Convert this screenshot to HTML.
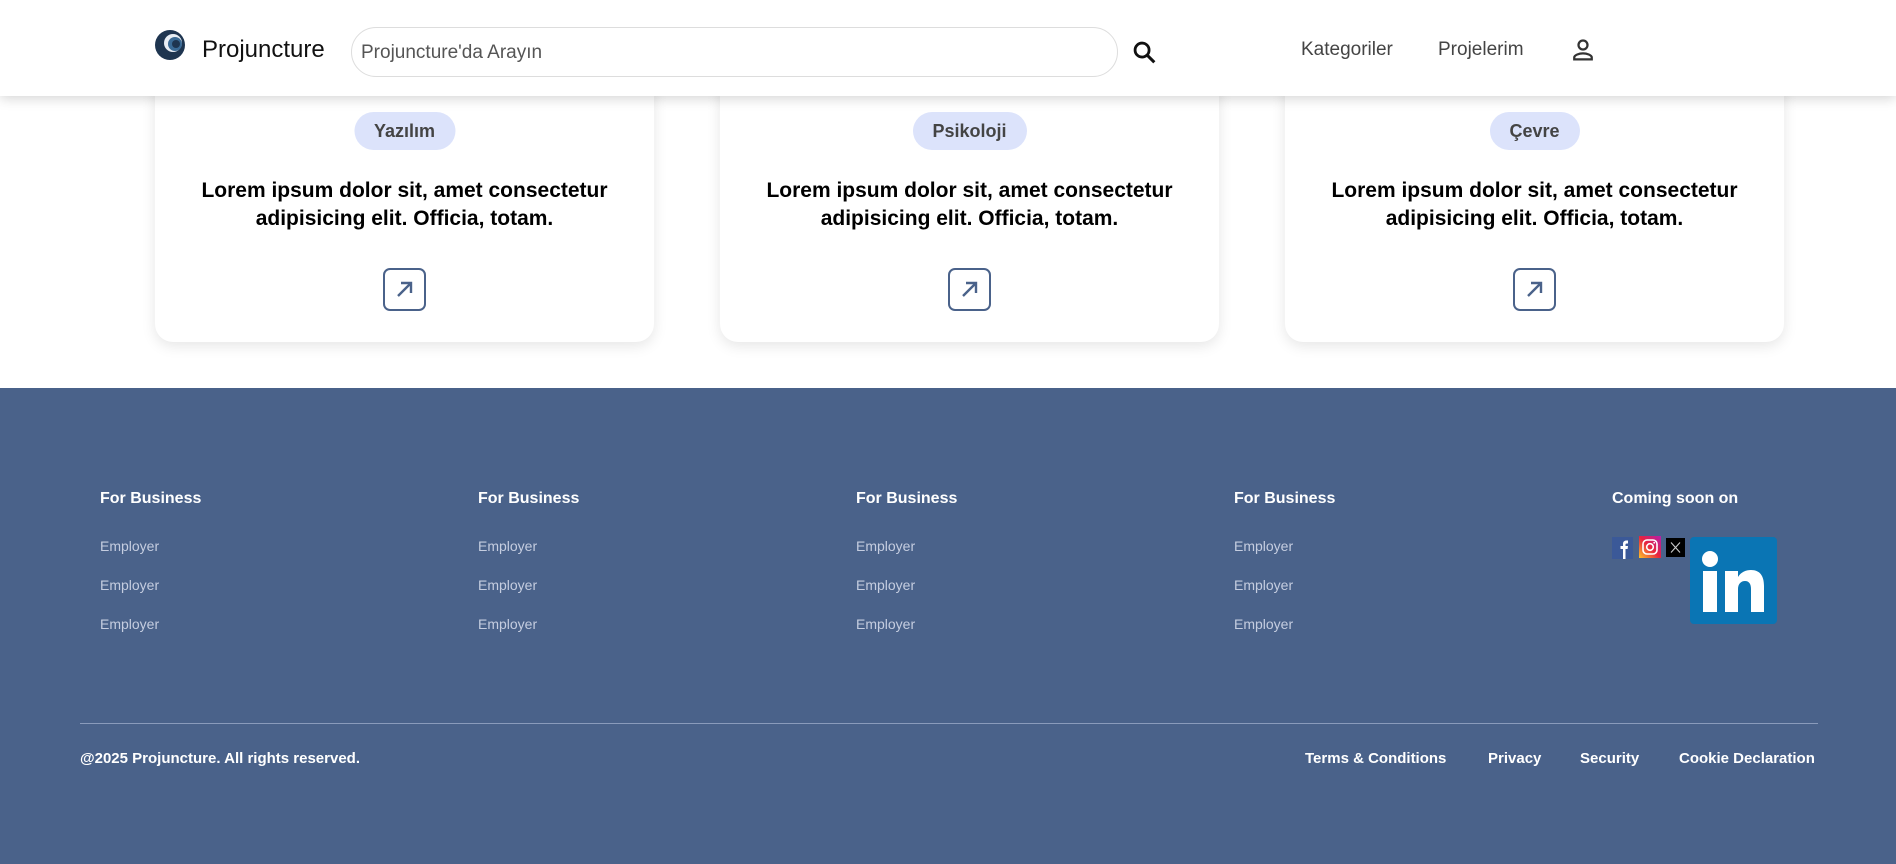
<!DOCTYPE html>
<html><head><meta charset="utf-8"><style>
*{box-sizing:border-box;margin:0;padding:0}
body{width:1896px;height:864px;overflow:hidden;background:#fff;font-family:"Liberation Sans",sans-serif;position:relative}
.hdr{position:absolute;left:0;top:0;width:1896px;height:96px;background:#fff;box-shadow:0 2px 12px rgba(0,0,0,.18);z-index:5}
.abs{position:absolute}
.card{position:absolute;top:60px;width:499px;height:282px;background:#fff;border-radius:18px;box-shadow:0 4px 14px rgba(0,0,0,.1)}
.pill{position:absolute;top:52px;left:50%;transform:translateX(-50%);height:38px;padding:0 20px;background:#dce3fb;border-radius:19px;font-size:18px;font-weight:bold;color:#444;line-height:38px}
.ct{position:absolute;top:117px;left:0;width:100%;text-align:center;font-size:21px;font-weight:bold;line-height:28px;color:#000}
.arr{position:absolute;top:208px;left:50%;margin-left:-22px;width:43px;height:43px;border:2px solid #4a628a;border-radius:7px}
.foot{position:absolute;left:0;top:388px;width:1896px;height:476px;background:#4a628a;color:#fff}
.h{position:absolute;top:102px;font-size:16px;font-weight:bold}
.e{position:absolute;font-size:14px;color:#c5cde0}
.b{position:absolute;top:362px;font-size:15px;font-weight:bold}
</style></head><body>
<div class="hdr">
<svg class="abs" style="left:154px;top:29px" width="32" height="32" viewBox="0 0 32 32"><circle cx="16" cy="16" r="15" fill="#1e3550"/><circle cx="19" cy="14" r="9" fill="#e8eef5"/><circle cx="21" cy="15" r="7" fill="#3a6a95"/><circle cx="22" cy="15" r="4" fill="#1e3550"/></svg>
<div class="abs" style="left:202px;top:36px;font-size:24px;color:#111">Projuncture</div>
<div class="abs" style="left:351px;top:27px;width:767px;height:50px;border:1px solid #ddd;border-radius:25px"></div>
<div class="abs" style="left:361px;top:42px;font-size:19px;color:#555">Projuncture'da Arayın</div>
<svg class="abs" style="left:1131px;top:39px" width="28" height="28" viewBox="0 0 24 24"><circle cx="9.5" cy="9.5" r="6" fill="none" stroke="#111" stroke-width="2.4"/><path d="M14 14l6 6" stroke="#111" stroke-width="2.6"/></svg>
<div class="abs" style="left:1301px;top:39px;font-size:19px;color:#444">Kategoriler</div>
<div class="abs" style="left:1438px;top:39px;font-size:19px;color:#444">Projelerim</div>
<svg class="abs" style="left:1568px;top:35px" width="30" height="30" viewBox="0 0 24 24"><circle cx="12" cy="8" r="3.6" fill="none" stroke="#333" stroke-width="1.8"/><path d="M5 19.5v-1.5c0-2 4-3.3 7-3.3s7 1.3 7 3.3v1.5z" fill="none" stroke="#333" stroke-width="1.8"/></svg>
</div>

<div class="card" style="left:155px"><div class="pill">Yazılım</div><div class="ct">Lorem ipsum dolor sit, amet consectetur<br>adipisicing elit. Officia, totam.</div><div class="arr"><svg width="39" height="39" viewBox="0 0 39 39"><path d="M13 26L26 13M16 13h10v10" fill="none" stroke="#4a628a" stroke-width="2.4"/></svg></div></div>
<div class="card" style="left:720px"><div class="pill">Psikoloji</div><div class="ct">Lorem ipsum dolor sit, amet consectetur<br>adipisicing elit. Officia, totam.</div><div class="arr"><svg width="39" height="39" viewBox="0 0 39 39"><path d="M13 26L26 13M16 13h10v10" fill="none" stroke="#4a628a" stroke-width="2.4"/></svg></div></div>
<div class="card" style="left:1285px"><div class="pill">Çevre</div><div class="ct">Lorem ipsum dolor sit, amet consectetur<br>adipisicing elit. Officia, totam.</div><div class="arr"><svg width="39" height="39" viewBox="0 0 39 39"><path d="M13 26L26 13M16 13h10v10" fill="none" stroke="#4a628a" stroke-width="2.4"/></svg></div></div>

<div class="foot">
<div class="h" style="left:100px">For Business</div>
<div class="h" style="left:478px">For Business</div>
<div class="h" style="left:856px">For Business</div>
<div class="h" style="left:1234px">For Business</div>
<div class="h" style="left:1612px">Coming soon on</div>
<div class="e" style="left:100px;top:150px">Employer</div><div class="e" style="left:100px;top:189px">Employer</div><div class="e" style="left:100px;top:228px">Employer</div>
<div class="e" style="left:478px;top:150px">Employer</div><div class="e" style="left:478px;top:189px">Employer</div><div class="e" style="left:478px;top:228px">Employer</div>
<div class="e" style="left:856px;top:150px">Employer</div><div class="e" style="left:856px;top:189px">Employer</div><div class="e" style="left:856px;top:228px">Employer</div>
<div class="e" style="left:1234px;top:150px">Employer</div><div class="e" style="left:1234px;top:189px">Employer</div><div class="e" style="left:1234px;top:228px">Employer</div>
<svg class="abs" style="left:1612px;top:149px" width="21" height="22" viewBox="0 0 21 22"><rect width="21" height="22" fill="#3b5998"/><path d="M11 22V12H8.5V9H11V7c0-2.5 1.5-3.5 3.5-3.5H16v3h-1.2c-1 0-1.3.5-1.3 1.3V9H16l-.4 3h-2.1v10z" fill="#fff"/></svg>
<svg class="abs" style="left:1639px;top:148px" width="22" height="22" viewBox="0 0 22 22"><defs><linearGradient id="g" x1="0" y1="1" x2="1" y2="0"><stop offset="0" stop-color="#fdc32a"/><stop offset=".5" stop-color="#e6233e"/><stop offset="1" stop-color="#b51fad"/></linearGradient></defs><rect width="22" height="22" fill="url(#g)"/><rect x="4" y="4" width="14" height="14" rx="4" fill="none" stroke="#fff" stroke-width="1.6"/><circle cx="11" cy="11" r="3.3" fill="none" stroke="#fff" stroke-width="1.6"/><circle cx="15.2" cy="6.8" r=".9" fill="#fff"/></svg>
<svg class="abs" style="left:1666px;top:150px" width="19" height="19" viewBox="0 0 19 19"><rect width="19" height="19" fill="#000"/><path d="M5 4.5l9 10M14 4.5l-9 10" stroke="#ccc" stroke-width="1.1"/></svg>
<svg class="abs" style="left:1690px;top:149px" width="87" height="87" viewBox="0 0 87 87"><rect width="87" height="87" rx="4" fill="#0a75b4"/><rect x="13" y="34" width="14" height="41" fill="#fff"/><circle cx="20" cy="22" r="8" fill="#fff"/><path d="M35 34h13v6c3-5 8-7 13-7 9 0 13 6 13 16v26H61V52c0-5-2-8-6-8s-7 3-7 8v23H35z" fill="#fff"/></svg>
<div class="abs" style="left:80px;top:335px;width:1738px;height:1px;background:#8a9bbb"></div>
<div class="b" style="left:80px">@2025 Projuncture. All rights reserved.</div>
<div class="b" style="left:1305px">Terms &amp; Conditions</div>
<div class="b" style="left:1488px">Privacy</div>
<div class="b" style="left:1580px">Security</div>
<div class="b" style="left:1679px">Cookie Declaration</div>
</div>
</body></html>
